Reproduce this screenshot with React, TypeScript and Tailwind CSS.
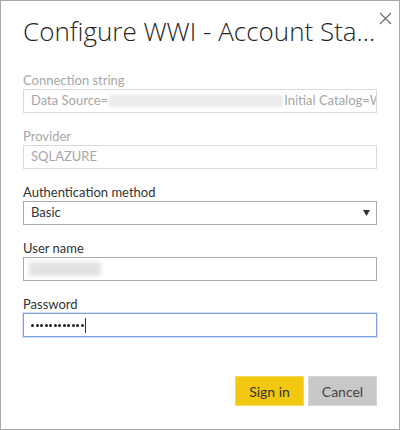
import React from "react";

const font = { fontFamily: 'Lato, "Open Sans", "Liberation Sans", sans-serif' };
const titleFont = { fontFamily: '"Open Sans", "Noto Sans", "Liberation Sans", sans-serif' };

function Label({ children, disabled }: { children: React.ReactNode; disabled?: boolean }) {
  return (
    <div className={`h-[16px] text-[13px] leading-[16px] ${disabled ? "text-[#a6a6a6]" : "text-[#333333]"}`}>
      {children}
    </div>
  );
}

export default function App() {
  const dots = Array.from({ length: 12 });
  return (
    <div style={font} className="w-[400px] h-[430px] bg-white border border-[#a9a9a9] relative overflow-hidden">
      <button className="absolute right-[6px] top-[9px] w-[16px] h-[16px] flex items-center justify-center">
        <svg width="13" height="13" viewBox="0 0 13 13">
          <path d="M1 1L12 12M12 1L1 12" stroke="#6b6b6b" strokeWidth="1.1" />
        </svg>
      </button>
      <div className="pl-[22px] pr-[22px]">
        <div style={titleFont} className="pt-[12px] h-[60px] text-[26px] font-light leading-[36px] text-[#252525] whitespace-nowrap">
          Configure WWI - Account Sta...
        </div>
        <div className="flex flex-col">
          <div className="mt-[11px]">
            <Label disabled>Connection string</Label>
            <div className="mt-[1px] h-[24px] border border-[#d9d9d9] flex items-center pl-[7px] text-[13px] text-[#a6a6a6] overflow-hidden whitespace-nowrap">
              <span className="shrink-0">Data Source=</span>
              <span className="shrink-0 inline-block w-[174px] h-[12px] bg-[#ececec] blur-[1.5px] mx-[1px]"></span>
              <span className="shrink-0">Initial Catalog=Wi</span>
            </div>
          </div>
          <div className="mt-[15px]">
            <Label disabled>Provider</Label>
            <div className="mt-[1px] h-[24px] border border-[#d9d9d9] flex items-center pl-[7px] text-[13px] text-[#a6a6a6]">
              SQLAZURE
            </div>
          </div>
          <div className="mt-[15px]">
            <Label>Authentication method</Label>
            <div className="mt-[1px] h-[24px] border border-[#ababab] flex items-center justify-between pl-[7px] pr-[6px] text-[13px] text-[#333333]">
              <span>Basic</span>
              <svg width="7" height="6" viewBox="0 0 7 6">
                <path d="M0 0H7L3.5 6Z" fill="#333333" />
              </svg>
            </div>
          </div>
          <div className="mt-[15px]">
            <Label>User name</Label>
            <div className="mt-[1px] h-[24px] border border-[#ababab] flex items-center pl-[5px]">
              <span className="inline-block w-[72px] h-[14px] bg-[#e2e2e2] blur-[2px]"></span>
            </div>
          </div>
          <div className="mt-[15px]">
            <Label>Password</Label>
            <div className="mt-[1px] h-[24px] border border-[#7aa3e5] shadow-[0_0_0_1px_#d6e3f7] flex items-center pl-[7px]">
              <div className="flex items-center gap-[1.5px]">
                {dots.map((_, i) => (
                  <span key={i} className="inline-block w-[3px] h-[3px] rounded-full bg-[#222222]"></span>
                ))}
              </div>
              <span className="inline-block w-[1px] h-[15px] bg-[#333333] ml-[1px]"></span>
            </div>
          </div>
        </div>
        <div className="flex justify-end gap-[4px] mt-[39px]">
          <button className="w-[69px] h-[30px] bg-[#f2c811] text-[14px] text-[#333333] border border-[#f5d75a]">Sign in</button>
          <button className="w-[69px] h-[30px] bg-[#c8c8c8] text-[14px] text-[#444444] border border-[#d6d6d6]">Cancel</button>
        </div>
      </div>
    </div>
  );
}
